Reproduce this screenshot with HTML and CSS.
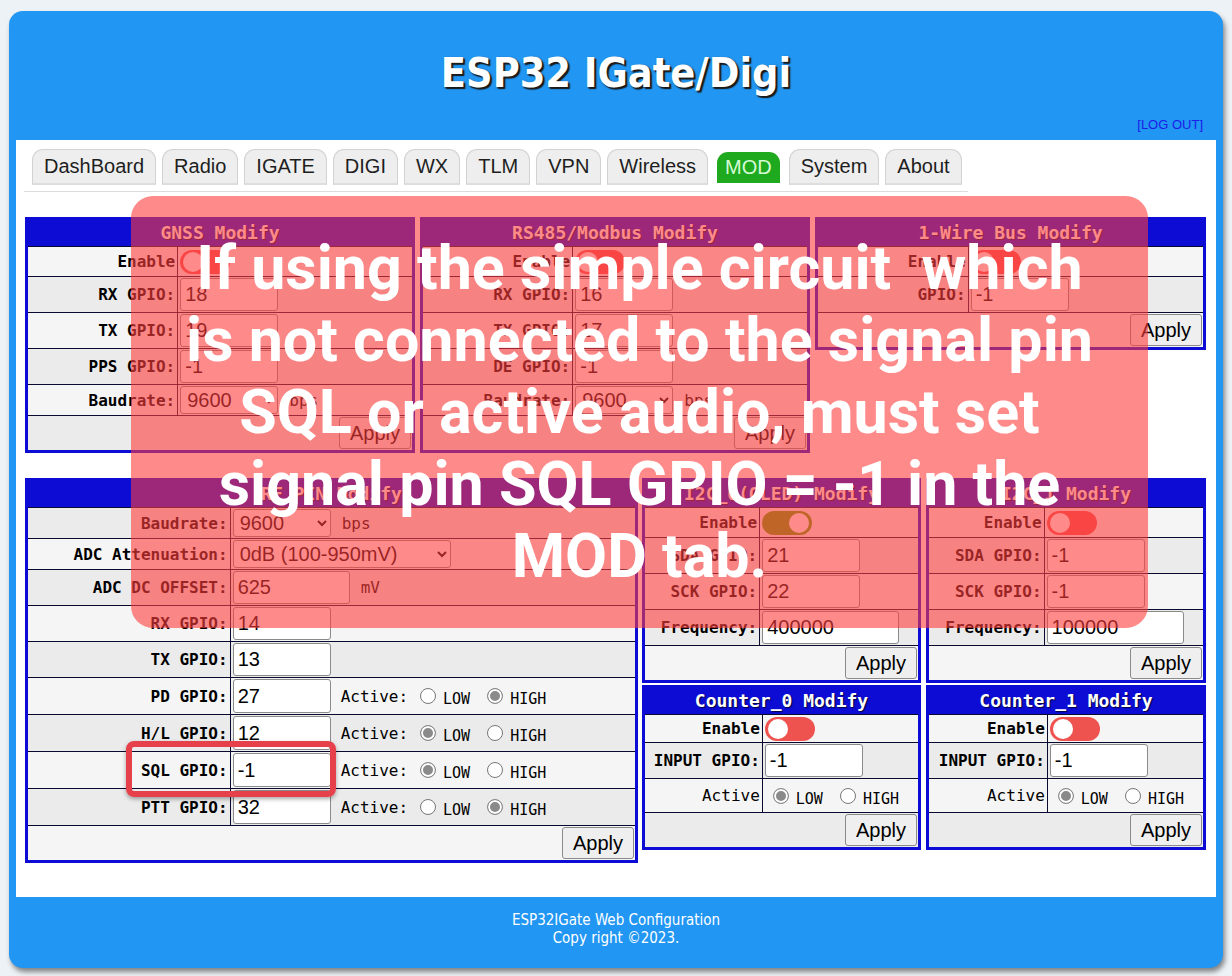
FILE: index.html
```html
<!DOCTYPE html>
<html>
<head>
<meta charset="utf-8">
<title>ESP32 IGate/Digi</title>
<link rel="stylesheet" href="styles.css">
</head>
<body>
<div class="page">
  <header class="top">
    <h1 class="title">ESP32 IGate/Digi</h1>
    <div class="logout"><a href="#">[LOG OUT]</a></div>
  </header>
  <main class="content">
    <nav class="tabs">
      <a class="tab">DashBoard</a>
      <a class="tab">Radio</a>
      <a class="tab">IGATE</a>
      <a class="tab">DIGI</a>
      <a class="tab">WX</a>
      <a class="tab">TLM</a>
      <a class="tab">VPN</a>
      <a class="tab">Wireless</a>
      <a class="tab active">MOD</a>
      <a class="tab">System</a>
      <a class="tab">About</a>
    </nav>

    <div class="row top-row">
      <div class="box third">
        <table class="tbl">
          <colgroup><col class="c39"><col></colgroup>
          <tr><th colspan="2">GNSS Modify</th></tr>
          <tr><td class="lab">Enable</td><td><span class="sw"></span></td></tr>
          <tr><td class="lab">RX GPIO:</td><td><input class="in" value="18"></td></tr>
          <tr><td class="lab">TX GPIO:</td><td><input class="in" value="19"></td></tr>
          <tr><td class="lab">PPS GPIO:</td><td><input class="in" value="-1"></td></tr>
          <tr><td class="lab">Baudrate:</td><td><select class="sel"><option>9600</option></select><span class="unit">bps</span></td></tr>
          <tr><td colspan="2" class="act"><button class="btn">Apply</button></td></tr>
        </table>
      </div>
      <div class="box third">
        <table class="tbl">
          <colgroup><col class="c39"><col></colgroup>
          <tr><th colspan="2">RS485/Modbus Modify</th></tr>
          <tr><td class="lab">Enable</td><td><span class="sw"></span></td></tr>
          <tr><td class="lab">RX GPIO:</td><td><input class="in" value="16"></td></tr>
          <tr><td class="lab">TX GPIO:</td><td><input class="in" value="17"></td></tr>
          <tr><td class="lab">DE GPIO:</td><td><input class="in" value="-1"></td></tr>
          <tr><td class="lab">Baudrate:</td><td><select class="sel"><option>9600</option></select><span class="unit">bps</span></td></tr>
          <tr><td colspan="2" class="act"><button class="btn">Apply</button></td></tr>
        </table>
      </div>
      <div class="box third last">
        <table class="tbl">
          <colgroup><col class="c39"><col></colgroup>
          <tr><th colspan="2">1-Wire Bus Modify</th></tr>
          <tr><td class="lab">Enable</td><td><span class="sw"></span></td></tr>
          <tr><td class="lab">GPIO:</td><td><input class="in" value="-1"></td></tr>
          <tr><td colspan="2" class="act"><button class="btn">Apply</button></td></tr>
        </table>
      </div>
    </div>

    <div class="row bottom-row">
      <div class="box wide">
        <table class="tbl inv">
          <colgroup><col class="c33"><col></colgroup>
          <tr><th colspan="2">RF PIN Modify</th></tr>
          <tr><td class="lab">Baudrate:</td><td><select class="sel"><option>9600</option></select><span class="unit">bps</span></td></tr>
          <tr><td class="lab">ADC Attenuation:</td><td><select class="sel long"><option>0dB (100-950mV)</option></select></td></tr>
          <tr><td class="lab">ADC DC OFFSET:</td><td><input class="in mid" value="625"><span class="unit">mV</span></td></tr>
          <tr><td class="lab">RX GPIO:</td><td><input class="in" value="14"></td></tr>
          <tr><td class="lab">TX GPIO:</td><td><input class="in" value="13"></td></tr>
          <tr class="rrow"><td class="lab">PD GPIO:</td><td><input class="in" value="27"><span class="active">Active:</span><label class="rd"><input type="radio" name="pd"><span>LOW</span></label><label class="rd"><input type="radio" name="pd" checked><span>HIGH</span></label></td></tr>
          <tr class="rrow"><td class="lab">H/L GPIO:</td><td><input class="in" value="12"><span class="active">Active:</span><label class="rd"><input type="radio" name="hl" checked><span>LOW</span></label><label class="rd"><input type="radio" name="hl"><span>HIGH</span></label></td></tr>
          <tr class="rrow"><td class="lab">SQL GPIO:</td><td><input class="in" value="-1"><span class="active">Active:</span><label class="rd"><input type="radio" name="sql" checked><span>LOW</span></label><label class="rd"><input type="radio" name="sql"><span>HIGH</span></label></td></tr>
          <tr class="rrow"><td class="lab">PTT GPIO:</td><td><input class="in" value="32"><span class="active">Active:</span><label class="rd"><input type="radio" name="ptt"><span>LOW</span></label><label class="rd"><input type="radio" name="ptt" checked><span>HIGH</span></label></td></tr>
          <tr><td colspan="2" class="act"><button class="btn">Apply</button></td></tr>
        </table>
      </div>

      <div class="grid2">
        <div class="box">
          <table class="tbl">
            <colgroup><col class="c42"><col></colgroup>
            <tr><th colspan="2">I2C_0(OLED) Modify</th></tr>
            <tr><td class="lab">Enable</td><td><span class="sw on"></span></td></tr>
            <tr><td class="lab">SDA GPIO:</td><td><input class="in" value="21"></td></tr>
            <tr><td class="lab">SCK GPIO:</td><td><input class="in" value="22"></td></tr>
            <tr><td class="lab">Frequency:</td><td><input class="in big" value="400000"></td></tr>
            <tr><td colspan="2" class="act"><button class="btn">Apply</button></td></tr>
          </table>
        </div>
        <div class="box">
          <table class="tbl">
            <colgroup><col class="c42"><col></colgroup>
            <tr><th colspan="2">I2C_1 Modify</th></tr>
            <tr><td class="lab">Enable</td><td><span class="sw"></span></td></tr>
            <tr><td class="lab">SDA GPIO:</td><td><input class="in" value="-1"></td></tr>
            <tr><td class="lab">SCK GPIO:</td><td><input class="in" value="-1"></td></tr>
            <tr><td class="lab">Frequency:</td><td><input class="in big" value="100000"></td></tr>
            <tr><td colspan="2" class="act"><button class="btn">Apply</button></td></tr>
          </table>
        </div>
        <div class="box">
          <table class="tbl">
            <colgroup><col class="c44"><col></colgroup>
            <tr><th colspan="2">Counter_0 Modify</th></tr>
            <tr><td class="lab">Enable</td><td><span class="sw sm"></span></td></tr>
            <tr><td class="lab">INPUT GPIO:</td><td><input class="in" value="-1"></td></tr>
            <tr class="radio-row"><td class="lab plain">Active</td><td><label class="rd first"><input type="radio" name="c0" checked><span>LOW</span></label><label class="rd"><input type="radio" name="c0"><span>HIGH</span></label></td></tr>
            <tr><td colspan="2" class="act"><button class="btn">Apply</button></td></tr>
          </table>
        </div>
        <div class="box">
          <table class="tbl">
            <colgroup><col class="c44"><col></colgroup>
            <tr><th colspan="2">Counter_1 Modify</th></tr>
            <tr><td class="lab">Enable</td><td><span class="sw sm"></span></td></tr>
            <tr><td class="lab">INPUT GPIO:</td><td><input class="in" value="-1"></td></tr>
            <tr class="radio-row"><td class="lab plain">Active</td><td><label class="rd first"><input type="radio" name="c1" checked><span>LOW</span></label><label class="rd"><input type="radio" name="c1"><span>HIGH</span></label></td></tr>
            <tr><td colspan="2" class="act"><button class="btn">Apply</button></td></tr>
          </table>
        </div>
      </div>
    </div>
  </main>
  <footer class="foot">
    <div>ESP32IGate Web Configuration</div>
    <div>Copy right ©2023.</div>
  </footer>
</div>

<div class="note">
  <p>If using the simple circuit&nbsp;&nbsp;which<br>is not connected to the signal pin<br>SQL or active audio, must set<br>signal pin SQL GPIO = -1 in the<br>MOD tab.</p>
</div>
<div class="mark"></div>
</body>
</html>
```

FILE: styles.css
```css
* { box-sizing: border-box; }
html, body { margin: 0; padding: 0; }
body {
  background: #edf2f6;
  font-family: "Liberation Sans", Arial, sans-serif;
  position: relative;
  height: 976px;
  overflow: hidden;
}

.page {
  margin: 11px 9px 0;
  height: 957px;
  background: #2196f3;
  border-radius: 14px;
  box-shadow: 2px 4px 5px rgba(0, 0, 0, 0.45);
  padding: 0 7px;
  overflow: hidden;
}

.top {
  height: 129px;
  padding-top: 38px;
  text-align: center;
}
.title {
  margin: 0;
  font-family: "DejaVu Sans Condensed", "DejaVu Sans", sans-serif;
  font-stretch: condensed;
  font-weight: bold;
  font-size: 41px;
  line-height: 48px;
  color: #fff;
  text-shadow: 2px 2px 1px #1a1a1a, 1px 1px 2px #333;
}
.logout {
  margin-top: 20px;
  text-align: right;
  padding-right: 13px;
  font-size: 13px;
  line-height: 16px;
}
.logout a { color: #1c1ce8; text-decoration: none; }

.content {
  background: #fff;
  height: 757px;
  padding: 9px 10px 0 9px;
}

.tabs {
  display: flex;
  gap: 6px;
  width: 944px;
  margin-left: -1px;
  padding: 0 0 6px 8px;
  border-bottom: 1px solid #dcdcdc;
  align-items: flex-start;
}
.tab {
  display: block;
  height: 36px;
  padding: 0 11px;
  border: 1px solid #d2d2d2;
  border-bottom: 2px solid #dedede;
  border-radius: 11px 11px 0 0;
  background: #eeeeee;
  font-size: 20px;
  line-height: 33px;
  color: #1e1e1e;
}
.tab.active {
  margin: 3px 3px 0;
  height: 31px;
  line-height: 31px;
  padding: 0 8px;
  border: 0;
  background: #1ea91e;
  color: #d4fbd4;
}

.row { display: flex; align-items: flex-start; }
.top-row { margin-top: 25px; gap: 5px; }
.bottom-row { margin-top: 25px; gap: 4px; }

.box {
  border: 3px solid #0c0cd4;
  background: #f5f5f5;
}
.third { width: 390px; }
.third.last { width: 391px; }
.wide { width: 613px; }

.grid2 {
  display: grid;
  grid-template-columns: 279px 280px;
  column-gap: 5px;
  row-gap: 2px;
}

.tbl {
  width: 100%;
  border-collapse: collapse;
  font-family: "DejaVu Sans Mono", "Liberation Mono", monospace;
  font-size: 16px;
  color: #000;
}
.c39 { width: 39%; }
.c33 { width: 33.3%; }
.c42 { width: 42%; }
.c44 { width: 44%; }

.tbl th {
  background: #0c0cd4;
  color: #fff;
  font-size: 18px;
  line-height: 24px;
  font-weight: bold;
  padding: 1px 0;
  text-shadow: 1px 1px 1px #000040;
}
.tbl td {
  border-top: 1px solid #0a0a30;
  padding: 1px 2px;
  background: #f5f5f5;
  white-space: nowrap;
}
.tbl tr:nth-child(odd) td { background: #ebebeb; }
.tbl.inv tr:nth-child(odd) td { background: #f5f5f5; }
.tbl.inv tr:nth-child(even) td { background: #ebebeb; }
.tbl td.lab {
  text-align: right;
  font-weight: bold;
  border-right: 1px solid #0a0a30;
  padding-right: 2px;
}
.tbl td.lab.plain { font-weight: normal; }
.tbl td.act { text-align: right; padding: 1px 1px 1px 2px; }

.sw {
  display: inline-block;
  vertical-align: middle;
  width: 50px;
  height: 24px;
  margin: 2px 0 1px;
  border-radius: 12px;
  background: #ef5350;
  position: relative;
}
.sw::after {
  content: "";
  position: absolute;
  left: 3px;
  top: 2px;
  width: 20px;
  height: 20px;
  border-radius: 50%;
  background: #fff;
}
.sw.on { background: #5fa40c; }
.sw.on::after { left: 27px; }
.sw.sm { margin: 1px 0 0; }

.in {
  display: inline-block;
  vertical-align: middle;
  width: 98px;
  height: 33px;
  border: 1px solid #8a8a8a;
  border-radius: 3px;
  background: #fff;
  font-family: "Liberation Sans", Arial, sans-serif;
  font-size: 20px;
  color: #000;
  padding: 0 4px;
  margin: 0;
}
.wide .in { height: 33px; }
.wide .rrow .in { height: 34px; }
.in.mid { width: 117px; }
.in.big { width: 137px; }

.sel {
  display: inline-block;
  vertical-align: middle;
  width: 98px;
  height: 28px;
  border: 1px solid #8a8a8a;
  border-radius: 3px;
  background: #fff;
  font-family: "Liberation Sans", Arial, sans-serif;
  font-size: 20px;
  color: #000;
  padding: 0 2px;
  margin: 0;
}
.sel.long { width: 218px; }

.unit {
  display: inline-block;
  vertical-align: middle;
  margin-left: 11px;
  font-size: 16px;
}
.active {
  display: inline-block;
  vertical-align: middle;
  margin-left: 10px;
  margin-right: 12px;
}
.rd {
  display: inline-flex;
  align-items: center;
  vertical-align: middle;
  margin-right: 17px;
}
.rd.first { margin-left: 8px; }
.rd span {
  font-size: 15px;
  position: relative;
  top: 3px;
}
.rd input {
  -webkit-appearance: none;
  appearance: none;
  width: 16px;
  height: 16px;
  margin: 0 7px 0 0;
  border: 1px solid #777;
  border-radius: 50%;
  background: #fff;
}
.rd input:checked {
  border-color: #8a8a8a;
  background: #8a8a8a;
  box-shadow: inset 0 0 0 2px #fff;
}
.radio-row td { height: 34px; }

.btn {
  height: 32px;
  padding: 0 10px;
  border: 1px solid #8a8a8a;
  border-radius: 3px;
  background: #efefef;
  font-family: "Liberation Sans", Arial, sans-serif;
  font-size: 20px;
  color: #000;
  vertical-align: middle;
}

.foot {
  height: 71px;
  padding-top: 14px;
  text-align: center;
  color: #fff;
  font-family: "DejaVu Sans Condensed", "DejaVu Sans", sans-serif;
  font-stretch: condensed;
  font-size: 15px;
  line-height: 18px;
}

.note {
  position: absolute;
  left: 131px;
  top: 196px;
  width: 1017px;
  height: 432px;
  border-radius: 22px;
  background: rgba(255, 60, 60, 0.6);
  display: flex;
  align-items: center;
  justify-content: center;
}
.note p {
  margin: 0;
  text-align: center;
  color: #fff;
  font-family: Roboto, "Noto Sans", sans-serif;
  font-weight: bold;
  font-size: 61px;
  line-height: 72px;
}

.mark {
  position: absolute;
  left: 126px;
  top: 741px;
  width: 210px;
  height: 56px;
  border: 6px solid #e6404b;
  border-radius: 8px;
  box-shadow: 0 2px 4px rgba(0, 0, 0, 0.35);
}
```
